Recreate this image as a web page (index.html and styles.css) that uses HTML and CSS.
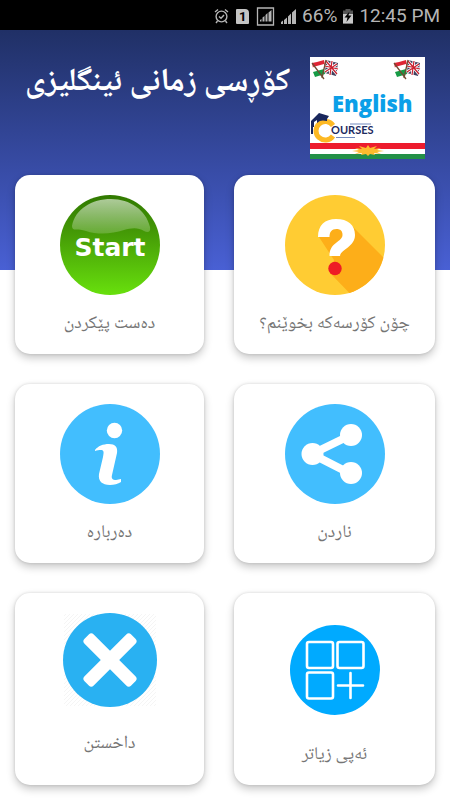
FILE: index.html
```html
<!DOCTYPE html>
<html lang="ckb">
<head>
<meta charset="utf-8">
<meta name="viewport" content="width=device-width, initial-scale=1">
<title>کۆڕسی زمانی ئینگلیزی</title>
<link rel="stylesheet" href="styles.css">
</head>
<body>
<div class="status">
  <svg width="15" height="17" viewBox="0 0 15 17" fill="none" stroke="currentColor" stroke-width="1.4"><circle cx="7.500" cy="8.500" r="5.400"/><path d="M1 4l3-2.500M14 4l-3-2.500M3.500 13l-1.500 2M11.500 13l1.500 2M5 8.500l2 1.800 3-3.300"/></svg>
  <span class="sim">1</span>
  <svg width="19" height="19" viewBox="0 0 19 19" fill="currentColor"><path d="M1.500 1h16v17h-16z" fill="none" stroke="currentColor" stroke-width="1.300"/><path d="M4 14.500v-1.500l1.500-1v2.500zM6.500 14.500v-4l2-1.500v5.500zM9.500 14.500v-6.500l2-2v8.500zM12.500 14.500v-9l3-2.500v11.500z"/></svg>
  <svg width="17" height="17" viewBox="0 0 17 17" fill="currentColor"><path d="M1 16v-2l2-1.500v3.500zM4 16v-4l3-2.500v6.500zM8 16v-7.500l3-3v10.500zM12 16v-11.500l4-3.500v15z"/></svg>
  <span class="charge">66%</span>
  <svg width="12" height="17" viewBox="0 0 12 17"><path d="M3.500 1h5v1.500h2.500v13h-10v-13h2.500z" fill="#555"/><path d="M1 6h10v9.500h-10z" fill="#c8c8c8"/><path d="M7.500 3.500L2.500 9.500h3l-1 4.500 5-6.500h-3z" fill="#000"/></svg>
  <time>12:45 PM</time>
</div>
<main class="screen">
  <header class="top">
    <h1 dir="rtl">کۆڕسی زمانی ئینگلیزی</h1>
    <svg class="logo" viewBox="0 0 115 102" role="img" aria-label="English Courses">
      <defs>
        <g id="flags">
          <path d="M2 6l5-1 7-2 1 5-12 3z" fill="#df2534"/><path d="M3 10l11-3 1 4-11 3z" fill="#fff"/><path d="M3 15l11-3 1 5-10 3z" fill="#169b45"/><path d="M2 6l12 16" stroke="#714c33" stroke-width="1.300"/>
          <path d="M16 3l12 3-2 13-11-3z" fill="#40405f"/><path d="M16 4l11 13M27 7L15 15M22 4l-2 14M15 9l13 3" stroke="#fff" stroke-width="2.800"/><path d="M16 4l11 13M27 7L15 15M22 4l-2 14M15 9l13 3" stroke="#c91d2c" stroke-width="1.200"/><path d="M16 3l-4 18" stroke="#714c33" stroke-width="1.300"/>
        </g>
      </defs>
      <path d="M0 0h115v102H0z" fill="#fff"/>
      <use href="#flags"/><use href="#flags" x="82"/>
      <text class="word-english" x="22" y="55">English</text>
      <path d="M23 68.500A9.300 9.300 0 1 0 23 79" fill="none" stroke="#fdb924" stroke-width="5"/>
      <path d="M3 62l6-6 10 3-2 3v2c-4-1-7-1-10 2v-3l-3 2v5H1v-6z" fill="#19275c"/><path d="M1 70h2v7H1z" fill="#19275c"/>
      <text class="word-courses" x="21" y="77">OURSES</text>
      <path d="M40 67h21M26 80.500h19" stroke="#7389bd" stroke-width="1"/>
      <path d="M0 86h115v6H0z" fill="#ed1c2e"/><path d="M0 97h115v5H0z" fill="#239047"/>
      <path d="M42 94l7-1-4-2 7 1-3-3 7 2 2-3 2 3 7-2-3 3 7-1-4 2 7 1-7 1 4 2-7-1 1 2-5-1-2 2-2-2-5 1 1-2-7 1 4-2z" fill="#fdbb2d"/>
    </svg>
  </header>
  <nav class="menu">
    <button class="card" type="button">
      <svg width="100" height="100" viewBox="0 0 100 100" aria-hidden="true">
        <defs>
          <linearGradient id="green" x1="0" y1="0" x2="0" y2="1"><stop offset="0" stop-color="#317900"/><stop offset=".35" stop-color="#439706"/><stop offset="1" stop-color="#68e00d"/></linearGradient>
          <linearGradient id="shine" x1="0" y1="0" x2="0" y2="1"><stop offset="0" stop-color="#fff" stop-opacity=".6"/><stop offset="1" stop-color="#fff" stop-opacity=".18"/></linearGradient>
        </defs>
        <circle cx="50" cy="50" r="50" fill="url(#green)"/>
        <path d="M12 31C15 14 32 4 51 4s35 11 39 28c1 5-2 6-6 4-6-4-13-3-20-1-12 4-26 5-38 1-8-3-14 1-14-5z" fill="url(#shine)"/>
        <text class="word-start" x="50" y="61">Start</text>
      </svg>
      <span class="label" dir="rtl">دەست پێکردن</span>
    </button>
    <button class="card" type="button">
      <svg width="100" height="100" viewBox="0 0 100 100" aria-hidden="true">
        <defs><clipPath id="disc"><circle cx="50" cy="50" r="50"/></clipPath></defs>
        <circle cx="50" cy="50" r="50" fill="#ffcc33"/>
        <path d="M68 32l42 42v40H80L45 78l4-13-15-23 18-10z" fill="#fdae19" clip-path="url(#disc)"/>
        <path d="M33 42C33 30 40 24 51 24c12 0 19 6 19 16 0 12-14 14-15 21H44.500c0-14 13-14 13-21 0-4-2-6-6-6-5 0-7 3-7 8z" fill="#fff"/>
        <circle cx="50" cy="73.500" r="6.700" fill="#ee1c25"/>
      </svg>
      <span class="label" dir="rtl">چۆن کۆرسەکە بخوێنم؟</span>
    </button>
    <button class="card" type="button">
      <svg width="100" height="100" viewBox="0 0 100 100" aria-hidden="true">
        <circle cx="50" cy="50" r="50" fill="#42befe"/>
        <circle cx="54.500" cy="26.500" r="7.700" fill="#fff"/>
        <path d="M35 46c3-4 8-6 14-6 6 0 9 3 8 9l-5 22c-1 4 1 5 4 5 2 0 3-1 5-1v3c-3 2-7 3-11 3-8 0-12-4-11-11l4-17c1-5 1-7-2-7-2 0-4 0-6 1z" fill="#fff"/>
      </svg>
      <span class="label" dir="rtl">دەربارە</span>
    </button>
    <button class="card" type="button">
      <svg width="100" height="100" viewBox="0 0 100 100" aria-hidden="true">
        <circle cx="50" cy="50" r="50" fill="#42befe"/>
        <path d="M66 31L27 50l39 20" fill="none" stroke="#fff" stroke-width="8"/>
        <g fill="#fff"><circle cx="66" cy="31" r="11"/><circle cx="27.500" cy="50" r="11"/><circle cx="66" cy="69" r="11"/></g>
      </svg>
      <span class="label" dir="rtl">ناردن</span>
    </button>
    <button class="card card-exit" type="button">
      <svg width="94" height="94" viewBox="0 0 94 94" aria-hidden="true">
        <defs><pattern id="hatch" width="4" height="4" patternUnits="userSpaceOnUse"><path d="M0 4L4 0" stroke="#eee" stroke-width=".6"/></pattern></defs>
        <path d="M1 1h92v92H1z" fill="url(#hatch)"/>
        <circle cx="47" cy="47" r="47" fill="#29b1f2"/>
        <g fill="#fff" transform="rotate(45 47 47)"><rect x="40.500" y="14" width="13" height="66" rx="3.500"/><rect x="14" y="40.500" width="66" height="13" rx="3.500"/></g>
      </svg>
      <span class="label" dir="rtl">داخستن</span>
    </button>
    <button class="card card-more" type="button">
      <svg width="90" height="90" viewBox="0 0 90 90" aria-hidden="true">
        <circle cx="45" cy="45" r="45" fill="#00aaff"/>
        <g fill="none" stroke="#fff" stroke-width="2.600" stroke-linecap="round"><rect x="17" y="17" width="26" height="26" rx="2"/><rect x="47.500" y="17" width="26" height="26" rx="2"/><rect x="17" y="47.500" width="26" height="26" rx="2"/><path d="M60.500 48v25M48 60.500h25"/></g>
      </svg>
      <span class="label" dir="rtl">ئەپی زیاتر</span>
    </button>
  </nav>
</main>
</body>
</html>
```
FILE: styles.css
```css
* { box-sizing: border-box; }
body {
  margin: 0;
  background: #fff;
  font-family: "Noto Naskh Arabic UI", "Noto Naskh Arabic", "Droid Arabic Naskh", "Open Sans", sans-serif;
}
.status {
  display: flex;
  align-items: center;
  justify-content: flex-end;
  gap: 5px;
  height: 30px;
  padding: 2px 10px 0;
  background: #000;
  color: #b5b5b5;
  font: 19px/28px Roboto, sans-serif;
}
.status svg { flex: none; }
.sim {
  width: 13px;
  margin: 0 2px;
  background: #c4c4c4;
  color: #000;
  border-radius: 1px 4px 1px 1px;
  font-size: 13px;
  font-weight: 700;
  line-height: 15px;
  text-align: center;
}
.screen {
  background: linear-gradient(#203066, #4960d4) no-repeat 0 0 / 100% 240px;
}
.top {
  display: flex;
  justify-content: space-between;
  gap: 20px;
  padding: 27px 25px 16px;
}
h1 {
  margin: 0;
  flex: 1;
  color: #fff;
  font-size: 32px;
  font-weight: 700;
  line-height: 52px;
  text-align: left;
  white-space: nowrap;
}
.logo { width: 115px; flex: none; display: block; }
.word-english { font: 800 22px "Open Sans", sans-serif; fill: #0b9fe8; }
.word-courses { font: 700 11px Lato, sans-serif; fill: #1d2b60; }
.word-start { font: 700 25px "DejaVu Sans", sans-serif; fill: #fff; text-anchor: middle; }
.menu {
  display: grid;
  grid-template-columns: 189fr 201fr;
  gap: 30px;
  padding: 0 15px 15px;
}
.card {
  display: flex;
  flex-direction: column;
  align-items: center;
  justify-content: flex-start;
  gap: 16px;
  padding: 20px 0 18px;
  border: 0;
  border-radius: 15px;
  background: #fff;
  box-shadow: 0 4px 8px rgba(0, 0, 0, .22), 0 0 3px rgba(0, 0, 0, .14);
  font: inherit;
  cursor: pointer;
}
.card svg { display: block; flex: none; }
.label {
  color: #757575;
  font-size: 18px;
  line-height: 25px;
  white-space: nowrap;
}
.card-exit { gap: 24px; }
.card-more { gap: 27px; padding-top: 32px; }
```
